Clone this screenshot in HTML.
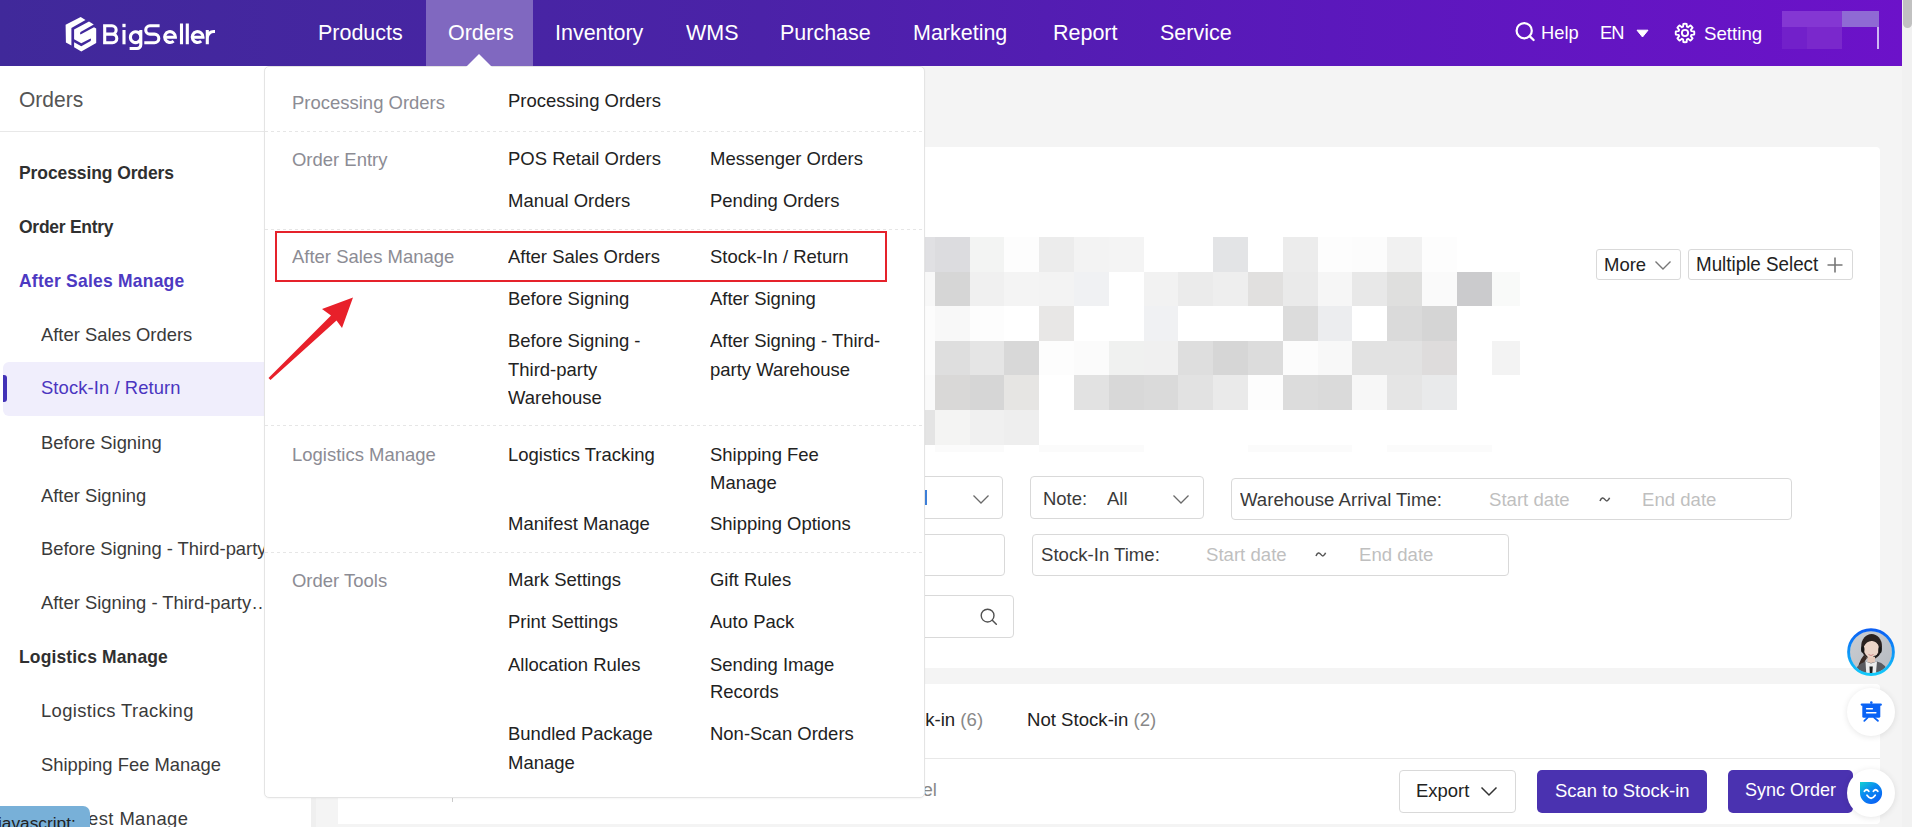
<!DOCTYPE html>
<html><head><meta charset="utf-8"><title>BigSeller</title>
<style>
html,body{margin:0;padding:0;width:1912px;height:827px;overflow:hidden;background:#fff;}
body{position:relative;font-family:"Liberation Sans",sans-serif;}
.t{position:absolute;white-space:nowrap;line-height:1;}
</style></head><body>
<div style="position:absolute;left:0px;top:66px;width:1902px;height:761px;background:#f4f4f4"></div>
<div style="position:absolute;left:0px;top:66px;width:311px;height:761px;background:#fff"></div>
<div style="position:absolute;left:311px;top:66px;width:5px;height:761px;background:#efefef"></div>
<div style="position:absolute;left:338px;top:147px;width:1542px;height:521px;background:#fff;border-radius:0 4px 4px 0"></div>
<div style="position:absolute;left:338px;top:684px;width:1542px;height:140px;background:#fff;border-radius:0 4px 4px 0"></div>
<div style="position:absolute;left:1902px;top:0px;width:10px;height:827px;background:#f1f1f1"></div>
<div style="position:absolute;left:1903px;top:0px;width:9px;height:28px;background:#c1c1c1;border-radius:0 0 5px 5px"></div>
<div style="position:absolute;left:924px;top:237px;width:11px;height:35px;background:#e0e0e3"></div>
<div style="position:absolute;left:935px;top:237px;width:35px;height:35px;background:#dcdcdf"></div>
<div style="position:absolute;left:970px;top:237px;width:34px;height:35px;background:#f3f4f3"></div>
<div style="position:absolute;left:1004px;top:237px;width:35px;height:35px;background:#fdfdfd"></div>
<div style="position:absolute;left:1039px;top:237px;width:35px;height:35px;background:#ececec"></div>
<div style="position:absolute;left:1074px;top:237px;width:35px;height:35px;background:#f3f3f3"></div>
<div style="position:absolute;left:1109px;top:237px;width:35px;height:35px;background:#f4f4f4"></div>
<div style="position:absolute;left:1213px;top:237px;width:35px;height:35px;background:#e3e4e6"></div>
<div style="position:absolute;left:1283px;top:237px;width:35px;height:35px;background:#ececec"></div>
<div style="position:absolute;left:1318px;top:237px;width:34px;height:35px;background:#fdfdfd"></div>
<div style="position:absolute;left:1352px;top:237px;width:35px;height:35px;background:#fcfcfc"></div>
<div style="position:absolute;left:1387px;top:237px;width:35px;height:35px;background:#f1f1f1"></div>
<div style="position:absolute;left:1422px;top:237px;width:35px;height:35px;background:#fdfdfd"></div>
<div style="position:absolute;left:924px;top:272px;width:11px;height:34px;background:#f8f8f8"></div>
<div style="position:absolute;left:935px;top:272px;width:35px;height:34px;background:#d6d6d6"></div>
<div style="position:absolute;left:970px;top:272px;width:34px;height:34px;background:#f0f0f0"></div>
<div style="position:absolute;left:1004px;top:272px;width:35px;height:34px;background:#f4f4f4"></div>
<div style="position:absolute;left:1039px;top:272px;width:35px;height:34px;background:#f3f3f3"></div>
<div style="position:absolute;left:1074px;top:272px;width:35px;height:34px;background:#f0f1f3"></div>
<div style="position:absolute;left:1144px;top:272px;width:34px;height:34px;background:#f2f2f2"></div>
<div style="position:absolute;left:1178px;top:272px;width:35px;height:34px;background:#ebebeb"></div>
<div style="position:absolute;left:1213px;top:272px;width:35px;height:34px;background:#eeeeee"></div>
<div style="position:absolute;left:1248px;top:272px;width:35px;height:34px;background:#e1e0df"></div>
<div style="position:absolute;left:1283px;top:272px;width:35px;height:34px;background:#eaeaea"></div>
<div style="position:absolute;left:1318px;top:272px;width:34px;height:34px;background:#f6f6f6"></div>
<div style="position:absolute;left:1352px;top:272px;width:35px;height:34px;background:#e8e8e8"></div>
<div style="position:absolute;left:1387px;top:272px;width:35px;height:34px;background:#dfdfde"></div>
<div style="position:absolute;left:1422px;top:272px;width:35px;height:34px;background:#fafafa"></div>
<div style="position:absolute;left:1457px;top:272px;width:35px;height:34px;background:#cbcbcd"></div>
<div style="position:absolute;left:1492px;top:272px;width:28px;height:34px;background:#f9faf9"></div>
<div style="position:absolute;left:924px;top:306px;width:11px;height:35px;background:#fcfcfc"></div>
<div style="position:absolute;left:935px;top:306px;width:35px;height:35px;background:#f8f8f8"></div>
<div style="position:absolute;left:970px;top:306px;width:34px;height:35px;background:#fdfdfd"></div>
<div style="position:absolute;left:1039px;top:306px;width:35px;height:35px;background:#e8e7e6"></div>
<div style="position:absolute;left:1144px;top:306px;width:34px;height:35px;background:#f0f1f3"></div>
<div style="position:absolute;left:1283px;top:306px;width:35px;height:35px;background:#dcdcdc"></div>
<div style="position:absolute;left:1318px;top:306px;width:34px;height:35px;background:#ecedef"></div>
<div style="position:absolute;left:1387px;top:306px;width:35px;height:35px;background:#dadada"></div>
<div style="position:absolute;left:1422px;top:306px;width:35px;height:35px;background:#d5d5d5"></div>
<div style="position:absolute;left:924px;top:341px;width:11px;height:34px;background:#fcfcfc"></div>
<div style="position:absolute;left:935px;top:341px;width:35px;height:34px;background:#dedede"></div>
<div style="position:absolute;left:970px;top:341px;width:34px;height:34px;background:#e5e5e5"></div>
<div style="position:absolute;left:1004px;top:341px;width:35px;height:34px;background:#d8d8d8"></div>
<div style="position:absolute;left:1039px;top:341px;width:35px;height:34px;background:#fdfdfd"></div>
<div style="position:absolute;left:1074px;top:341px;width:35px;height:34px;background:#fbfbfb"></div>
<div style="position:absolute;left:1109px;top:341px;width:35px;height:34px;background:#f0f1f0"></div>
<div style="position:absolute;left:1144px;top:341px;width:34px;height:34px;background:#f0f0f0"></div>
<div style="position:absolute;left:1178px;top:341px;width:35px;height:34px;background:#dedede"></div>
<div style="position:absolute;left:1213px;top:341px;width:35px;height:34px;background:#d6d6d6"></div>
<div style="position:absolute;left:1248px;top:341px;width:35px;height:34px;background:#dcdcdc"></div>
<div style="position:absolute;left:1283px;top:341px;width:35px;height:34px;background:#fcfcfc"></div>
<div style="position:absolute;left:1318px;top:341px;width:34px;height:34px;background:#f8f8f8"></div>
<div style="position:absolute;left:1352px;top:341px;width:35px;height:34px;background:#e2e2e2"></div>
<div style="position:absolute;left:1387px;top:341px;width:35px;height:34px;background:#e2e2e2"></div>
<div style="position:absolute;left:1422px;top:341px;width:35px;height:34px;background:#dedcdc"></div>
<div style="position:absolute;left:1492px;top:341px;width:28px;height:34px;background:#f3f3f3"></div>
<div style="position:absolute;left:924px;top:375px;width:11px;height:35px;background:#fafafa"></div>
<div style="position:absolute;left:935px;top:375px;width:35px;height:35px;background:#d9d8d7"></div>
<div style="position:absolute;left:970px;top:375px;width:34px;height:35px;background:#d6d6d6"></div>
<div style="position:absolute;left:1004px;top:375px;width:35px;height:35px;background:#e6e5e3"></div>
<div style="position:absolute;left:1074px;top:375px;width:35px;height:35px;background:#e2e2e2"></div>
<div style="position:absolute;left:1109px;top:375px;width:35px;height:35px;background:#d8d8d8"></div>
<div style="position:absolute;left:1144px;top:375px;width:34px;height:35px;background:#dadada"></div>
<div style="position:absolute;left:1178px;top:375px;width:35px;height:35px;background:#e2e2e2"></div>
<div style="position:absolute;left:1213px;top:375px;width:35px;height:35px;background:#eaeaea"></div>
<div style="position:absolute;left:1248px;top:375px;width:35px;height:35px;background:#fdfdfd"></div>
<div style="position:absolute;left:1283px;top:375px;width:35px;height:35px;background:#dcdcdc"></div>
<div style="position:absolute;left:1318px;top:375px;width:34px;height:35px;background:#dadada"></div>
<div style="position:absolute;left:1352px;top:375px;width:35px;height:35px;background:#f7f7f7"></div>
<div style="position:absolute;left:1387px;top:375px;width:35px;height:35px;background:#e5e5e5"></div>
<div style="position:absolute;left:1422px;top:375px;width:35px;height:35px;background:#e9eaeb"></div>
<div style="position:absolute;left:924px;top:410px;width:11px;height:35px;background:#e4e4e4"></div>
<div style="position:absolute;left:935px;top:410px;width:35px;height:35px;background:#f4f4f3"></div>
<div style="position:absolute;left:970px;top:410px;width:34px;height:35px;background:#f0f0f0"></div>
<div style="position:absolute;left:1004px;top:410px;width:35px;height:35px;background:#eeeeee"></div>
<div style="position:absolute;left:935px;top:445px;width:35px;height:7px;background:#fbfbfb"></div>
<div style="position:absolute;left:970px;top:445px;width:34px;height:7px;background:#fbfbfb"></div>
<div style="position:absolute;left:1039px;top:445px;width:35px;height:7px;background:#fbfbfb"></div>
<div style="position:absolute;left:1074px;top:445px;width:35px;height:7px;background:#fbfbfb"></div>
<div style="position:absolute;left:1109px;top:445px;width:35px;height:7px;background:#fbfbfb"></div>
<div style="position:absolute;left:1248px;top:445px;width:35px;height:7px;background:#fbfbfb"></div>
<div style="position:absolute;left:1283px;top:445px;width:35px;height:7px;background:#fbfbfb"></div>
<div style="position:absolute;left:1318px;top:445px;width:34px;height:7px;background:#fbfbfb"></div>
<div style="position:absolute;left:1387px;top:445px;width:35px;height:7px;background:#fbfbfb"></div>
<div style="position:absolute;left:1422px;top:445px;width:35px;height:7px;background:#fbfbfb"></div>
<div style="position:absolute;left:1457px;top:445px;width:35px;height:7px;background:#fbfbfb"></div>
<div style="position:absolute;left:452px;top:797px;width:1px;height:5px;background:#ccc"></div>
<div style="position:absolute;left:700px;top:476px;width:303px;height:43px;border:1px solid #d9d9d9;box-sizing:border-box;border-radius:4px;background:#fff"></div>
<svg style="position:absolute;left:972px;top:494px" width="18" height="11" viewBox="0 0 18 11"><path d="M1.5 1.5 L9 9 L16.5 1.5" fill="none" stroke="#6a6a6a" stroke-width="1.3"/></svg>
<div style="position:absolute;left:1030px;top:476px;width:174px;height:43px;border:1px solid #d9d9d9;box-sizing:border-box;border-radius:4px;background:#fff"></div>
<div class="t" style="left:1042.5px;top:489.2px;font-size:19.05px;color:#3a3a3a;font-weight:400;transform:scaleX(0.9709);transform-origin:0 0;">Note:</div>
<div class="t" style="left:1106.5px;top:489.2px;font-size:19.05px;color:#3a3a3a;font-weight:400;transform:scaleX(0.9709);transform-origin:0 0;">All</div>
<svg style="position:absolute;left:1172px;top:494px" width="18" height="11" viewBox="0 0 18 11"><path d="M1.5 1.5 L9 9 L16.5 1.5" fill="none" stroke="#6a6a6a" stroke-width="1.3"/></svg>
<div style="position:absolute;left:1231px;top:478px;width:561px;height:42px;border:1px solid #d9d9d9;box-sizing:border-box;border-radius:4px;background:#fff"></div>
<div class="t" style="left:1239.5px;top:489.8px;font-size:19.16px;color:#3a3a3a;font-weight:400;transform:scaleX(0.9709);transform-origin:0 0;">Warehouse Arrival Time:</div>
<div class="t" style="left:1488.5px;top:489.8px;font-size:19.16px;color:#bfbfbf;font-weight:400;transform:scaleX(0.9709);transform-origin:0 0;">Start date</div>
<svg style="position:absolute;left:1598.5px;top:495.5px" width="12" height="7" viewBox="0 0 12 7"><path d="M1 5 C2.5 1.2 4.2 1.2 5.8 3.4 C7.4 5.6 9 5.6 10.6 1.8" fill="none" stroke="#555" stroke-width="1.5"/></svg>
<div class="t" style="left:1642px;top:489.8px;font-size:19.16px;color:#bfbfbf;font-weight:400;transform:scaleX(0.9709);transform-origin:0 0;">End date</div>
<div style="position:absolute;left:700px;top:534px;width:305px;height:42px;border:1px solid #d9d9d9;box-sizing:border-box;border-radius:4px;background:#fff"></div>
<div style="position:absolute;left:925px;top:490px;width:2px;height:15px;background:#3d7fd9"></div>
<div class="t" style="left:915px;top:545.4px;font-size:19.16px;color:#bfbfbf;font-weight:400;transform:scaleX(0.9709);transform-origin:0 0;">e</div>
<div style="position:absolute;left:1032px;top:534px;width:477px;height:42px;border:1px solid #d9d9d9;box-sizing:border-box;border-radius:4px;background:#fff"></div>
<div class="t" style="left:1040.8px;top:545.4px;font-size:19.16px;color:#3a3a3a;font-weight:400;transform:scaleX(0.9709);transform-origin:0 0;">Stock-In Time:</div>
<div class="t" style="left:1205.8px;top:545.4px;font-size:19.16px;color:#bfbfbf;font-weight:400;transform:scaleX(0.9709);transform-origin:0 0;">Start date</div>
<svg style="position:absolute;left:1315px;top:551px" width="12" height="7" viewBox="0 0 12 7"><path d="M1 5 C2.5 1.2 4.2 1.2 5.8 3.4 C7.4 5.6 9 5.6 10.6 1.8" fill="none" stroke="#555" stroke-width="1.5"/></svg>
<div class="t" style="left:1359px;top:545.4px;font-size:19.16px;color:#bfbfbf;font-weight:400;transform:scaleX(0.9709);transform-origin:0 0;">End date</div>
<div style="position:absolute;left:700px;top:595px;width:314px;height:43px;border:1px solid #d9d9d9;box-sizing:border-box;border-radius:4px;background:#fff"></div>
<svg style="position:absolute;left:979px;top:607px" width="20" height="20" viewBox="0 0 20 20"><circle cx="8.6" cy="8.6" r="6.4" fill="none" stroke="#505050" stroke-width="1.4"/><path d="M13.3 13.3 L17.3 17.3" stroke="#505050" stroke-width="1.5" stroke-linecap="round"/></svg>
<div style="position:absolute;left:1596px;top:249px;width:85px;height:31px;border:1px solid #d9d9d9;box-sizing:border-box;border-radius:3px;background:#fff"></div>
<div class="t" style="left:1604px;top:255.4px;font-size:19.05px;color:#222;font-weight:400;transform:scaleX(0.9709);transform-origin:0 0;">More</div>
<svg style="position:absolute;left:1654px;top:260px" width="18" height="11" viewBox="0 0 18 11"><path d="M1.5 1.5 L9 9 L16.5 1.5" fill="none" stroke="#777" stroke-width="1.4"/></svg>
<div style="position:absolute;left:1688px;top:249px;width:165px;height:31px;border:1px solid #d9d9d9;box-sizing:border-box;border-radius:3px;background:#fff"></div>
<div class="t" style="left:1696.3px;top:255.1px;font-size:19.36px;color:#222;font-weight:400;transform:scaleX(0.9709);transform-origin:0 0;">Multiple Select</div>
<svg style="position:absolute;left:1827px;top:257px" width="16" height="16" viewBox="0 0 16 16"><path d="M8 0.5 V15.5 M0.5 8 H15.5" stroke="#777" stroke-width="1.6"/></svg>
<div class="t" style="left:888px;top:710.2px;font-size:19.16px;color:#222;font-weight:400;transform:scaleX(0.9709);transform-origin:0 0;">Stock-in <span style="color:#888">(6)</span></div>
<div class="t" style="left:1027.4px;top:710.2px;font-size:19.16px;color:#222;font-weight:400;transform:scaleX(0.9709);transform-origin:0 0;">Not Stock-in <span style="color:#888">(2)</span></div>
<div style="position:absolute;left:338px;top:758px;width:1542px;height:1px;background:#e8e8e8"></div>
<div class="t" style="left:879px;top:780.4px;font-size:19.16px;color:#888;font-weight:400;transform:scaleX(0.9709);transform-origin:0 0;">Cancel</div>
<div style="position:absolute;left:1399px;top:770px;width:117px;height:43px;border:1px solid #d9d9d9;box-sizing:border-box;border-radius:4px;background:#fff"></div>
<div class="t" style="left:1416px;top:780.9px;font-size:19.05px;color:#222;font-weight:400;transform:scaleX(0.9709);transform-origin:0 0;">Export</div>
<svg style="position:absolute;left:1480px;top:786px" width="18" height="11" viewBox="0 0 18 11"><path d="M1.5 1.5 L9 9 L16.5 1.5" fill="none" stroke="#333" stroke-width="1.5"/></svg>
<div style="position:absolute;left:1537px;top:770px;width:170px;height:43px;background:#4a32b0;border-radius:5px"></div>
<div class="t" style="left:1554.5px;top:780.9px;font-size:19.05px;color:#fff;font-weight:400;transform:scaleX(0.9709);transform-origin:0 0;">Scan to Stock-in</div>
<div style="position:absolute;left:1728px;top:770px;width:125px;height:43px;background:#4a32b0;border-radius:5px"></div>
<div class="t" style="left:1745px;top:781.3px;font-size:18.54px;color:#fff;font-weight:400;transform:scaleX(0.9709);transform-origin:0 0;">Sync Order</div>
<div style="position:absolute;left:0px;top:0px;width:1902px;height:66px;background:linear-gradient(90deg,#40299a 0%,#4b22a8 40%,#5b18bc 70%,#6c12c9 100%)"></div>
<div style="position:absolute;left:426px;top:0px;width:107px;height:66px;background:#8068c0"></div>
<svg style="position:absolute;left:0;top:0" width="110" height="66" viewBox="0 0 110 66"><path fill="#fff" d="M65.6 24.8 L80.7 17 L85.5 20 L71.4 28 L71.4 45.5 L65.9 42.5 Z"/><path fill="#fff" d="M74.1 29.6 L89 21.4 L93.8 24.4 L80.5 32 Q79.5 33.5 80.5 34.6 L94 27.2 L96.2 28.5 L96.2 43 L81.3 51.4 L74.1 47.2 L74.1 42.3 L81.3 46.3 L90.6 41 Q91.5 39 90.6 38.4 L81.3 43.3 L74.1 39.3 Z"/></svg>
<svg style="position:absolute;left:0;top:0" width="230" height="66" viewBox="0 0 230 66"><g fill="none" stroke="#fff" stroke-width="3.1"><path d="M104.7 24.2 V44.3 M103.1 25.8 H112 A4.15 4.15 0 0 1 112 34.1 H104.7 M104.7 34.1 H112.5 A4.3 4.3 0 0 1 112.5 42.7 H103.1"/><path d="M124 30 V44.3"/><path d="M140.8 30 V44.8 A3.7 3.7 0 0 1 137.1 48.5 H129.6 M140.8 37.1 A5.2 5.4 0 1 0 140.8 37.2"/><path d="M159.6 25.8 H149.9 A4.15 4.15 0 0 0 149.9 34.1 H154.5 A4.3 4.3 0 0 1 154.5 42.7 H144.3"/><path d="M164.6 37.2 H175.4 A5.4 5.4 0 1 0 173.6 41.1"/><path d="M181.5 23.6 V44.3 M187.3 23.6 V44.3"/><path d="M192.2 37.2 H203 A5.4 5.4 0 1 0 201.2 41.1"/><path d="M207.3 30 V44.3 M207.3 38 A6.5 6.5 0 0 1 213.8 31.5 H215"/></g><rect x="122.4" y="23.8" width="3.2" height="3.4" fill="#fff"/></svg>
<div class="t" style="left:318px;top:21.9px;font-size:22.14px;color:#fff;font-weight:400;transform:scaleX(0.9709);transform-origin:0 0;">Products</div>
<div class="t" style="left:447.5px;top:21.9px;font-size:22.14px;color:#fff;font-weight:400;transform:scaleX(0.9709);transform-origin:0 0;">Orders</div>
<div class="t" style="left:555px;top:21.9px;font-size:22.14px;color:#fff;font-weight:400;transform:scaleX(0.9709);transform-origin:0 0;">Inventory</div>
<div class="t" style="left:686px;top:21.9px;font-size:22.14px;color:#fff;font-weight:400;transform:scaleX(0.9709);transform-origin:0 0;">WMS</div>
<div class="t" style="left:780px;top:21.9px;font-size:22.14px;color:#fff;font-weight:400;transform:scaleX(0.9709);transform-origin:0 0;">Purchase</div>
<div class="t" style="left:913px;top:21.9px;font-size:22.14px;color:#fff;font-weight:400;transform:scaleX(0.9709);transform-origin:0 0;">Marketing</div>
<div class="t" style="left:1053px;top:21.9px;font-size:22.14px;color:#fff;font-weight:400;transform:scaleX(0.9709);transform-origin:0 0;">Report</div>
<div class="t" style="left:1160px;top:21.9px;font-size:22.14px;color:#fff;font-weight:400;transform:scaleX(0.9709);transform-origin:0 0;">Service</div>
<svg style="position:absolute;left:1514px;top:21px" width="22" height="22" viewBox="0 0 22 22"><circle cx="10.2" cy="9.7" r="7.6" fill="none" stroke="#fff" stroke-width="2.2"/><path d="M15.6 15.2 L19.6 19" stroke="#fff" stroke-width="2.3" stroke-linecap="round"/></svg>
<div class="t" style="left:1540.5px;top:23.8px;font-size:18.85px;color:#fff;font-weight:400;transform:scaleX(0.9709);transform-origin:0 0;">Help</div>
<div class="t" style="left:1600.0px;top:23.8px;font-size:18.85px;color:#fff;font-weight:400;transform:scaleX(0.9709);transform-origin:0 0;letter-spacing:-1.030px">EN</div>
<svg style="position:absolute;left:1636px;top:29px" width="13" height="9" viewBox="0 0 13 9"><path d="M1 1.2 H12 L6.5 8 Z" fill="#fff" stroke="#fff" stroke-width="1" stroke-linejoin="round"/></svg>
<svg style="position:absolute;left:1672.5px;top:20.5px" width="24" height="24" viewBox="0 0 24 24"><path fill="none" stroke="#fff" stroke-width="1.9" stroke-linejoin="round" d="M10.07 5.69 L10.39 2.84 A9.3 9.3 0 0 1 13.61 2.84 L13.93 5.69 A6.6 6.6 0 0 1 15.10 6.17 L15.10 6.17 L17.33 4.38 A9.3 9.3 0 0 1 19.62 6.67 L17.83 8.90 A6.6 6.6 0 0 1 18.31 10.07 L18.31 10.07 L21.16 10.39 A9.3 9.3 0 0 1 21.16 13.61 L18.31 13.93 A6.6 6.6 0 0 1 17.83 15.10 L17.83 15.10 L19.62 17.33 A9.3 9.3 0 0 1 17.33 19.62 L15.10 17.83 A6.6 6.6 0 0 1 13.93 18.31 L13.93 18.31 L13.61 21.16 A9.3 9.3 0 0 1 10.39 21.16 L10.07 18.31 A6.6 6.6 0 0 1 8.90 17.83 L8.90 17.83 L6.67 19.62 A9.3 9.3 0 0 1 4.38 17.33 L6.17 15.10 A6.6 6.6 0 0 1 5.69 13.93 L5.69 13.93 L2.84 13.61 A9.3 9.3 0 0 1 2.84 10.39 L5.69 10.07 A6.6 6.6 0 0 1 6.17 8.90 L6.17 8.90 L4.38 6.67 A9.3 9.3 0 0 1 6.67 4.38 L8.90 6.17 A6.6 6.6 0 0 1 10.07 5.69 Z"/><circle cx="12" cy="12" r="3.1" fill="none" stroke="#fff" stroke-width="1.9"/></svg>
<div class="t" style="left:1704.2px;top:23.5px;font-size:19.26px;color:#fff;font-weight:400;transform:scaleX(0.9709);transform-origin:0 0;">Setting</div>
<div style="position:absolute;left:1782px;top:11px;width:60px;height:16px;background:#8437d3"></div>
<div style="position:absolute;left:1842px;top:11px;width:37px;height:16px;background:#8f6ad4"></div>
<div style="position:absolute;left:1782px;top:27px;width:25px;height:22px;background:#7220ca"></div>
<div style="position:absolute;left:1807px;top:27px;width:35px;height:22px;background:#7a28cc"></div>
<div style="position:absolute;left:1877px;top:27px;width:2px;height:22px;background:#cdb8f2"></div>
<div class="t" style="left:19px;top:89.0px;font-size:21.63px;color:#555;font-weight:400;transform:scaleX(0.9709);transform-origin:0 0;">Orders</div>
<div style="position:absolute;left:0px;top:131px;width:312px;height:1px;background:#e8e8e8"></div>
<div style="position:absolute;left:3px;top:362px;width:309px;height:54px;background:#f0eefc;border-radius:6px"></div>
<div style="position:absolute;left:3px;top:375px;width:4px;height:27px;background:#4232b6;border-radius:0 3px 3px 0"></div>
<div class="t" style="left:19px;top:163.6px;font-size:18.38px;color:#303030;font-weight:700;transform:scaleX(0.9524);transform-origin:0 0;letter-spacing:-0.095px">Processing Orders</div>
<div class="t" style="left:19px;top:217.7px;font-size:18.38px;color:#303030;font-weight:700;transform:scaleX(0.9524);transform-origin:0 0;letter-spacing:-0.273px">Order Entry</div>
<div class="t" style="left:19px;top:271.8px;font-size:18.38px;color:#4d39c2;font-weight:700;transform:scaleX(0.9524);transform-origin:0 0;letter-spacing:0.242px">After Sales Manage</div>
<div class="t" style="left:40.5px;top:325.5px;font-size:18.95px;color:#3a3a3a;font-weight:400;transform:scaleX(0.9709);transform-origin:0 0;letter-spacing:0.000px">After Sales Orders</div>
<div class="t" style="left:40.5px;top:379.3px;font-size:18.95px;color:#4a35c0;font-weight:400;transform:scaleX(0.9709);transform-origin:0 0;letter-spacing:0.103px">Stock-In / Return</div>
<div class="t" style="left:40.5px;top:433.5px;font-size:18.95px;color:#3a3a3a;font-weight:400;transform:scaleX(0.9709);transform-origin:0 0;letter-spacing:0.000px">Before Signing</div>
<div class="t" style="left:40.5px;top:487.3px;font-size:18.95px;color:#3a3a3a;font-weight:400;transform:scaleX(0.9709);transform-origin:0 0;letter-spacing:0.000px">After Signing</div>
<div class="t" style="left:40.5px;top:540.1px;font-size:18.95px;color:#3a3a3a;font-weight:400;transform:scaleX(0.9709);transform-origin:0 0;letter-spacing:0.000px">Before Signing - Third-party Warehouse</div>
<div class="t" style="left:40.5px;top:593.9px;font-size:18.95px;color:#3a3a3a;font-weight:400;transform:scaleX(0.9709);transform-origin:0 0;letter-spacing:0.000px">After Signing - Third-party…</div>
<div class="t" style="left:19px;top:648.2px;font-size:18.38px;color:#303030;font-weight:700;transform:scaleX(0.9524);transform-origin:0 0;letter-spacing:0.147px">Logistics Manage</div>
<div class="t" style="left:40.5px;top:702.0px;font-size:18.95px;color:#3a3a3a;font-weight:400;transform:scaleX(0.9709);transform-origin:0 0;letter-spacing:0.381px">Logistics Tracking</div>
<div class="t" style="left:40.5px;top:755.9px;font-size:18.95px;color:#3a3a3a;font-weight:400;transform:scaleX(0.9709);transform-origin:0 0;letter-spacing:0.000px">Shipping Fee Manage</div>
<div class="t" style="left:40.5px;top:809.5px;font-size:18.95px;color:#3a3a3a;font-weight:400;transform:scaleX(0.9709);transform-origin:0 0;letter-spacing:0.433px">Manifest Manage</div>
<div style="position:absolute;left:0;top:806px;width:90px;height:30px;background:#78b0d8;border-radius:0 7px 0 0;overflow:hidden"><div class="t" style="left:-2px;top:9px;font-size:17.3px;color:#222">javascript:</div></div>
<div style="position:absolute;left:264px;top:66px;width:661px;height:732px;background:#fff;border:1px solid #e4e4e4;box-sizing:border-box;border-radius:5px 5px 5px 5px;box-shadow:0 1px 2px rgba(0,0,0,0.04)"></div>
<svg style="position:absolute;left:466px;top:53px" width="26" height="14" viewBox="0 0 26 14"><path d="M0 14 L13 1 L26 14 Z" fill="#fff"/></svg>
<div style="position:absolute;left:265px;top:131px;width:659px;height:1px;background-image:linear-gradient(90deg,#e6e6e6 50%,transparent 50%);background-size:6px 1px"></div>
<div style="position:absolute;left:265px;top:229px;width:659px;height:1px;background-image:linear-gradient(90deg,#e6e6e6 50%,transparent 50%);background-size:6px 1px"></div>
<div style="position:absolute;left:265px;top:425px;width:659px;height:1px;background-image:linear-gradient(90deg,#e6e6e6 50%,transparent 50%);background-size:6px 1px"></div>
<div style="position:absolute;left:265px;top:552px;width:659px;height:1px;background-image:linear-gradient(90deg,#e6e6e6 50%,transparent 50%);background-size:6px 1px"></div>
<div class="t" style="left:292.3px;top:92.5px;font-size:19.05px;color:#8c8c94;font-weight:400;transform:scaleX(0.9709);transform-origin:0 0;">Processing Orders</div>
<div class="t" style="left:508px;top:91.3px;font-size:19.05px;color:#222;font-weight:400;transform:scaleX(0.9709);transform-origin:0 0;">Processing Orders</div>
<div class="t" style="left:292.3px;top:149.5px;font-size:19.05px;color:#8c8c94;font-weight:400;transform:scaleX(0.9709);transform-origin:0 0;">Order Entry</div>
<div class="t" style="left:508px;top:149.3px;font-size:19.05px;color:#222;font-weight:400;transform:scaleX(0.9709);transform-origin:0 0;">POS Retail Orders</div>
<div class="t" style="left:710.3px;top:149.3px;font-size:19.05px;color:#222;font-weight:400;transform:scaleX(0.9709);transform-origin:0 0;">Messenger Orders</div>
<div class="t" style="left:508px;top:191.4px;font-size:19.05px;color:#222;font-weight:400;transform:scaleX(0.9709);transform-origin:0 0;">Manual Orders</div>
<div class="t" style="left:710.3px;top:191.4px;font-size:19.05px;color:#222;font-weight:400;transform:scaleX(0.9709);transform-origin:0 0;">Pending Orders</div>
<div class="t" style="left:292.3px;top:247.4px;font-size:19.05px;color:#8c8c94;font-weight:400;transform:scaleX(0.9709);transform-origin:0 0;">After Sales Manage</div>
<div class="t" style="left:508px;top:246.9px;font-size:19.05px;color:#222;font-weight:400;transform:scaleX(0.9709);transform-origin:0 0;">After Sales Orders</div>
<div class="t" style="left:710.3px;top:246.9px;font-size:19.05px;color:#222;font-weight:400;transform:scaleX(0.9709);transform-origin:0 0;">Stock-In / Return</div>
<div class="t" style="left:508px;top:289.3px;font-size:19.05px;color:#222;font-weight:400;transform:scaleX(0.9709);transform-origin:0 0;">Before Signing</div>
<div class="t" style="left:710.3px;top:289.3px;font-size:19.05px;color:#222;font-weight:400;transform:scaleX(0.9709);transform-origin:0 0;">After Signing</div>
<div class="t" style="left:508px;top:330.7px;font-size:19.05px;color:#222;font-weight:400;transform:scaleX(0.9709);transform-origin:0 0;">Before Signing -</div>
<div class="t" style="left:508px;top:359.7px;font-size:19.05px;color:#222;font-weight:400;transform:scaleX(0.9709);transform-origin:0 0;">Third-party</div>
<div class="t" style="left:508px;top:387.7px;font-size:19.05px;color:#222;font-weight:400;transform:scaleX(0.9709);transform-origin:0 0;">Warehouse</div>
<div class="t" style="left:710.3px;top:330.7px;font-size:19.05px;color:#222;font-weight:400;transform:scaleX(0.9709);transform-origin:0 0;">After Signing - Third-</div>
<div class="t" style="left:710.3px;top:359.7px;font-size:19.05px;color:#222;font-weight:400;transform:scaleX(0.9709);transform-origin:0 0;">party Warehouse</div>
<div class="t" style="left:292.3px;top:444.5px;font-size:19.05px;color:#8c8c94;font-weight:400;transform:scaleX(0.9709);transform-origin:0 0;">Logistics Manage</div>
<div class="t" style="left:508px;top:445.0px;font-size:19.05px;color:#222;font-weight:400;transform:scaleX(0.9709);transform-origin:0 0;">Logistics Tracking</div>
<div class="t" style="left:710.3px;top:445.0px;font-size:19.05px;color:#222;font-weight:400;transform:scaleX(0.9709);transform-origin:0 0;">Shipping Fee</div>
<div class="t" style="left:710.3px;top:472.6px;font-size:19.05px;color:#222;font-weight:400;transform:scaleX(0.9709);transform-origin:0 0;">Manage</div>
<div class="t" style="left:508px;top:513.9px;font-size:19.05px;color:#222;font-weight:400;transform:scaleX(0.9709);transform-origin:0 0;">Manifest Manage</div>
<div class="t" style="left:710.3px;top:513.9px;font-size:19.05px;color:#222;font-weight:400;transform:scaleX(0.9709);transform-origin:0 0;">Shipping Options</div>
<div class="t" style="left:292.3px;top:570.8px;font-size:19.05px;color:#8c8c94;font-weight:400;transform:scaleX(0.9709);transform-origin:0 0;">Order Tools</div>
<div class="t" style="left:508px;top:570.3px;font-size:19.05px;color:#222;font-weight:400;transform:scaleX(0.9709);transform-origin:0 0;">Mark Settings</div>
<div class="t" style="left:710.3px;top:570.3px;font-size:19.05px;color:#222;font-weight:400;transform:scaleX(0.9709);transform-origin:0 0;">Gift Rules</div>
<div class="t" style="left:508px;top:612.0px;font-size:19.05px;color:#222;font-weight:400;transform:scaleX(0.9709);transform-origin:0 0;">Print Settings</div>
<div class="t" style="left:710.3px;top:612.0px;font-size:19.05px;color:#222;font-weight:400;transform:scaleX(0.9709);transform-origin:0 0;">Auto Pack</div>
<div class="t" style="left:508px;top:654.6px;font-size:19.05px;color:#222;font-weight:400;transform:scaleX(0.9709);transform-origin:0 0;">Allocation Rules</div>
<div class="t" style="left:710.3px;top:654.6px;font-size:19.05px;color:#222;font-weight:400;transform:scaleX(0.9709);transform-origin:0 0;">Sending Image</div>
<div class="t" style="left:710.3px;top:681.9px;font-size:19.05px;color:#222;font-weight:400;transform:scaleX(0.9709);transform-origin:0 0;">Records</div>
<div class="t" style="left:508px;top:724.4px;font-size:19.05px;color:#222;font-weight:400;transform:scaleX(0.9709);transform-origin:0 0;">Bundled Package</div>
<div class="t" style="left:508px;top:753.0px;font-size:19.05px;color:#222;font-weight:400;transform:scaleX(0.9709);transform-origin:0 0;">Manage</div>
<div class="t" style="left:710.3px;top:724.4px;font-size:19.05px;color:#222;font-weight:400;transform:scaleX(0.9709);transform-origin:0 0;">Non-Scan Orders</div>
<div style="position:absolute;left:275px;top:231px;width:612px;height:51px;border:2px solid #e5222b;box-sizing:border-box"></div>
<svg style="position:absolute;left:0;top:0" width="400" height="400" viewBox="0 0 400 400"><path fill="#e8202a" d="M268.5 378 L331 315.5 L322 309 L353 297.5 L342 328 L336.5 320.5 L270.5 380 Z"/></svg>
<svg style="position:absolute;left:1845px;top:625px" width="52" height="53" viewBox="0 0 52 53"><defs><clipPath id="cc"><circle cx="26" cy="27.1" r="21.2"/></clipPath><linearGradient id="rg" x1="0" y1="0" x2="0" y2="1"><stop offset="0" stop-color="#0b5ff4"/><stop offset="1" stop-color="#12c9fa"/></linearGradient><linearGradient id="bgg" x1="0" y1="0" x2="1" y2="1"><stop offset="0" stop-color="#cdd0d5"/><stop offset="1" stop-color="#b4b8be"/></linearGradient></defs><g clip-path="url(#cc)"><rect width="52" height="53" fill="url(#bgg)"/><path d="M19 30 Q12 38 13.5 48 L18.5 48 Q17 39 22 33 Z" fill="#3b2b25"/><ellipse cx="26.6" cy="21.5" rx="10.4" ry="12.6" fill="#2a2220"/><rect x="22.5" y="30" width="7.5" height="8" fill="#e6c9b9"/><path d="M8 53 Q9 40 20.5 36.5 L26 38 L32 36.5 Q43 39 44 53 Z" fill="#5a5b60"/><path d="M20.5 36.5 L26 38.5 L32 36.5 L30.5 53 L21.5 53 Z" fill="#ececec"/><path d="M24.5 41.5 L27.8 41.5 L27 53 L25 53 Z" fill="#1d1d1d"/><ellipse cx="26.3" cy="23.6" rx="7.6" ry="9.2" fill="#ecd5c8"/><path d="M18.5 22 Q18 11.5 26.5 11 Q34.5 11.5 34.8 22 Q31 15.5 26.5 16 Q21.5 16 18.5 22 Z" fill="#2a2220"/><ellipse cx="17.8" cy="24.5" rx="1.7" ry="3.3" fill="#161616"/><ellipse cx="35" cy="25" rx="1.7" ry="3.3" fill="#161616"/><path d="M34 29 Q32 31.5 28.5 31.5" fill="none" stroke="#161616" stroke-width="1.2"/><path d="M23.5 29.5 Q26 31.5 28.5 29.5" fill="none" stroke="#d08a8a" stroke-width="1"/></g><circle cx="26" cy="27.1" r="22.4" fill="none" stroke="url(#rg)" stroke-width="2.9"/></svg>
<div style="position:absolute;left:1847px;top:688px;width:48px;height:48px;border-radius:50%;background:#fff;box-shadow:0 1px 6px rgba(0,0,0,0.10)"></div>
<svg style="position:absolute;left:1852px;top:692px" width="38" height="38" viewBox="0 0 38 38"><circle cx="19.3" cy="10.6" r="1.3" fill="#0a63f5"/><rect x="8.7" y="11.4" width="21.2" height="2.4" rx="1.2" fill="#0a63f5"/><path d="M10.3 13 H28.3 V24.3 Q28.3 25.8 26.8 25.8 H11.8 Q10.3 25.8 10.3 24.3 Z" fill="#0a63f5"/><path d="M14.6 16.8 H20.4 M14.6 20.7 H23.9" stroke="#fff" stroke-width="1.4" stroke-linecap="round"/><path d="M15.6 25.6 L12.3 28.8 M22.2 25.6 L25.9 28.8" stroke="#0a63f5" stroke-width="1.8" stroke-linecap="round"/></svg>
<div style="position:absolute;left:1847px;top:769px;width:48px;height:48px;border-radius:50%;background:#fff;box-shadow:0 1px 6px rgba(0,0,0,0.10)"></div>
<svg style="position:absolute;left:1852px;top:772px" width="38" height="38" viewBox="0 0 38 38"><defs><linearGradient id="sg" x1="0" y1="0" x2="0.7" y2="1"><stop offset="0" stop-color="#10d3d2"/><stop offset="0.45" stop-color="#0a8cf0"/><stop offset="1" stop-color="#0a62f5"/></linearGradient></defs><path d="M8 9.9 H19.05 A11.05 11.05 0 1 1 8 20.95 Z" fill="url(#sg)"/><path d="M12.4 19.2 Q14.6 16.3 16.8 19.2 M21.4 19.2 Q23.6 16.3 25.8 19.2 M15 23.3 Q19.1 29.2 23.2 23.3" fill="none" stroke="#fff" stroke-width="1.8" stroke-linecap="round"/></svg>
</body></html>
